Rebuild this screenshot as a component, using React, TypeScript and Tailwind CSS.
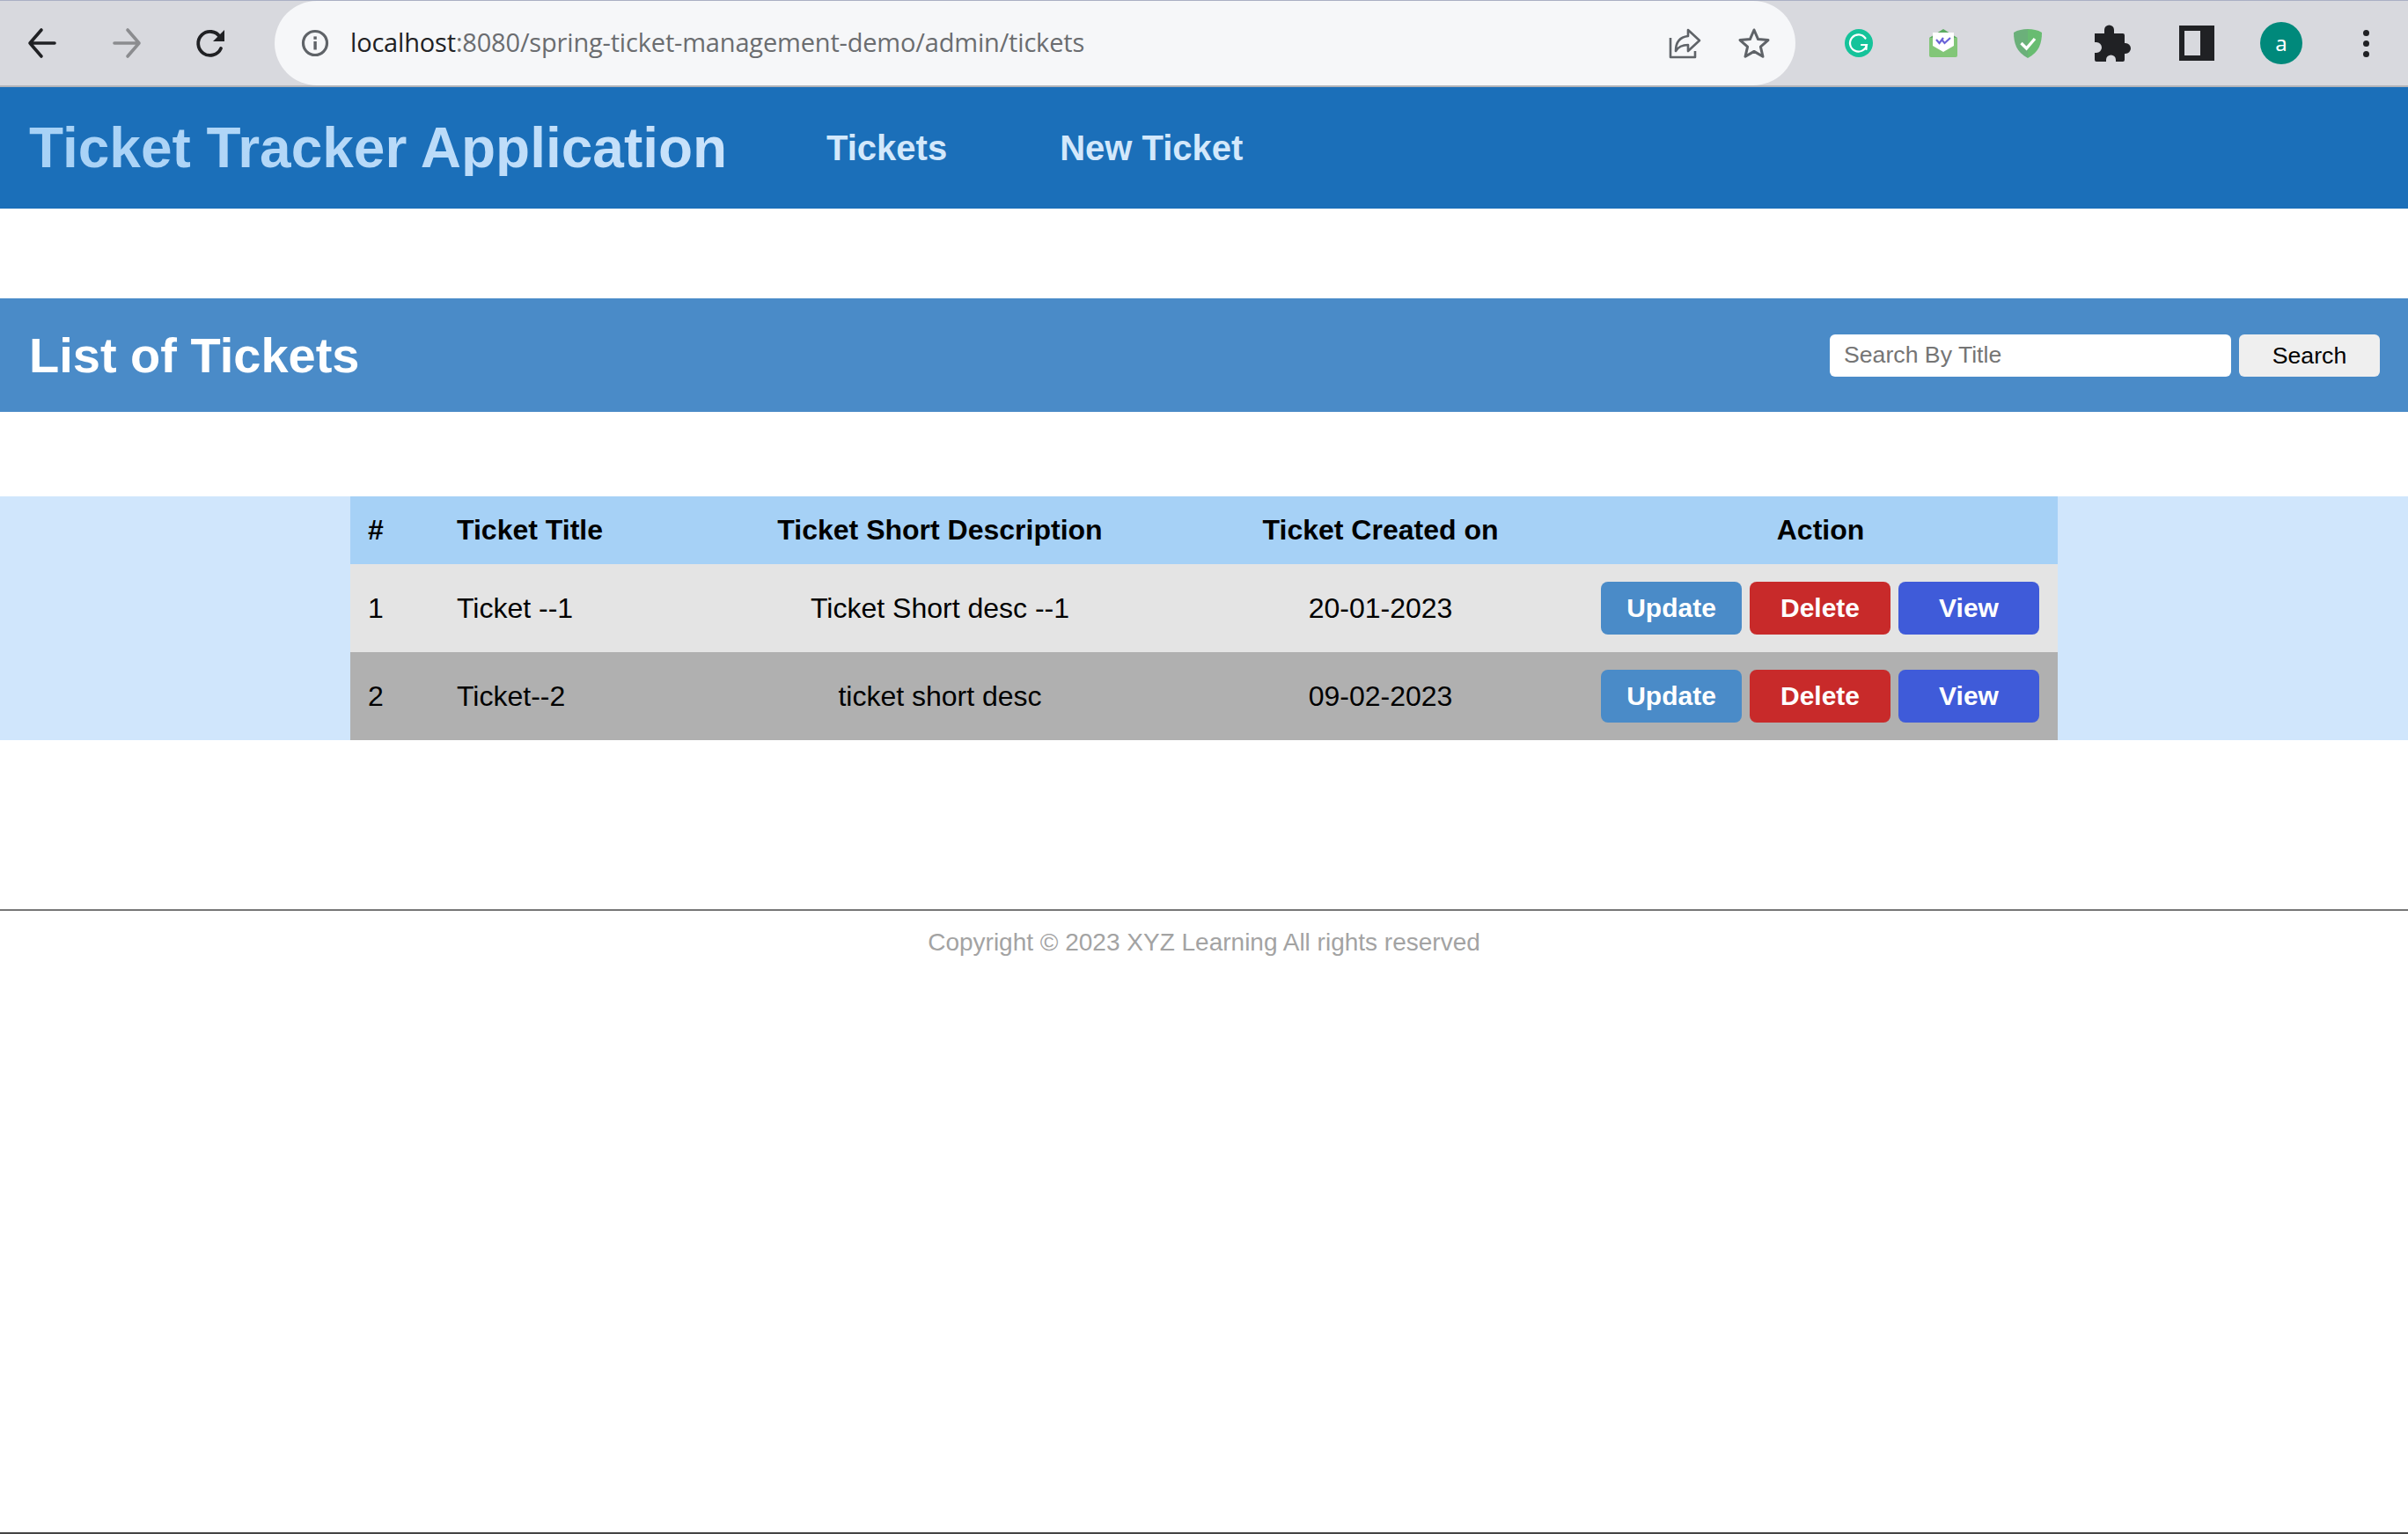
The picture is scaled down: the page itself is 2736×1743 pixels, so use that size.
import React from "react";

const slot = "flex h-full w-[96px] shrink-0 items-center justify-center";

function Toolbar() {
  return (
    <div className="flex h-[99px] items-stretch border-t border-b-2 border-t-[#aab0c4] border-b-[#b1b3b8] bg-[#d8d9de]">
      <div className={slot}>
        <svg width="36" height="36" viewBox="0 0 36 36" fill="none" stroke="#202124" strokeWidth="3.6" strokeLinecap="round" strokeLinejoin="round"><path d="M32 18H4M17 3 4 18l13 15" /></svg>
      </div>
      <div className={slot}>
        <svg width="36" height="36" viewBox="0 0 36 36" fill="none" stroke="#8b8c8f" strokeWidth="3.6" strokeLinecap="round" strokeLinejoin="round"><path d="M4 18h28M19 3l13 15-13 15" /></svg>
      </div>
      <div className={slot}>
        <svg width="36" height="36" viewBox="0 0 36 36" fill="none"><path d="M29 24a13.5 13.5 0 1 1-1-13" stroke="#202124" strokeWidth="3.8" strokeLinecap="round" /><path d="M33 3v13H20z" fill="#202124" /></svg>
      </div>
      <div className="ml-[24px] flex w-[1728px] shrink-0 items-center rounded-full bg-[#f6f7f9] pl-[30px] pr-[28px]">
        <svg width="32" height="32" viewBox="0 0 32 32" fill="none" className="shrink-0"><circle cx="16" cy="16" r="13.5" stroke="#5f6368" strokeWidth="3.2" /><rect x="14.4" y="14" width="3.4" height="9.5" fill="#5f6368" /><rect x="14.4" y="8.4" width="3.4" height="3.4" fill="#5f6368" /></svg>
        <div className="ml-[24px] pb-[3px] font-['Open_Sans',sans-serif] text-[29px] leading-none tracking-[-0.18px] whitespace-nowrap text-[#6b6d70]">
          <span className="text-[#202124]">localhost</span>:8080/spring-ticket-management-demo/admin/tickets
        </div>
        <div className="ml-auto flex items-center gap-[41px]">
          <svg width="38" height="38" viewBox="0 0 38 38" fill="none" stroke="#5f6368" strokeWidth="2.6" strokeLinejoin="round"><path d="M3 13v22h28v-7" /><path d="M23 4l13 12-13 12v-7c-7 0-11 2-14 7 0-10 5-16 14-17z" /></svg>
          <svg width="38" height="38" viewBox="0 0 38 38" fill="none" stroke="#5f6368" strokeWidth="3" strokeLinejoin="round"><path d="M19 4l4.6 10.6 11.4 1-8.6 7.5 2.6 11.2L19 28.4 9 34.3l2.6-11.2L3 15.6l11.4-1z" /></svg>
        </div>
      </div>
      <div className="ml-[24px] flex h-full">
        <div className={slot}>
          <svg width="34" height="34" viewBox="0 0 34 34" fill="none"><circle cx="17" cy="17" r="16" fill="#15c39a" /><path d="M24.5 11.5a9.6 9.6 0 1 0 1.5 7.5h-6" stroke="#fff" strokeWidth="2.2" strokeLinecap="round" /><path d="M25.5 19v5" stroke="#fff" strokeWidth="2.2" strokeLinecap="round" /></svg>
        </div>
        <div className={slot}>
          <svg width="34" height="34" viewBox="0 0 34 34" fill="none"><path d="M17 1 1 11h32z" fill="#5cab62" /><path d="M1 11v20a2 2 0 0 0 2 2h28a2 2 0 0 0 2-2V11z" fill="#82c678" /><path d="M5 5h24v15l-12 7-12-7z" fill="#fff" /><path d="M9 13l3.5 4L17 11M16 14l2.5 3L25 11" stroke="#6a63d8" strokeWidth="2.2" fill="none" /></svg>
        </div>
        <div className={slot}>
          <svg width="34" height="34" viewBox="0 0 34 34" fill="none"><path d="M17 1C11 1 6 2 1 5c0 12 3 22 16 29z" fill="#6bb07a" /><path d="M17 1c6 0 11 1 16 4 0 12-3 22-16 29z" fill="#68bc71" /><path d="M9.5 17l6 6 9.5-11" stroke="#fff" strokeWidth="3.4" /></svg>
        </div>
        <div className={slot}>
          <svg width="42" height="42" viewBox="0 0 42 42"><path d="M1 10h11V6a5.5 5.5 0 0 1 11 0v4h10a2 2 0 0 1 2 2v9h1a6 6 0 0 1 0 12h-1v7a2 2 0 0 1-2 2h-8v-2a5.5 5.5 0 0 0-11 0v2H3a2 2 0 0 1-2-2v-8h2a6 6 0 0 0 0-12H1z" fill="#202124" /></svg>
        </div>
        <div className={slot}>
          <div className="flex h-[40px] w-[40px] justify-start border-[6px] border-r-[16px] border-[#202124] bg-[#d8d9de]" />
        </div>
        <div className={slot}>
          <div className="flex h-[48px] w-[48px] items-center justify-center rounded-full bg-[#00897b] font-['Noto_Sans',sans-serif] text-[24px] leading-none text-white">a</div>
        </div>
        <div className={slot}>
          <div className="flex flex-col gap-[5px]">
            <span className="h-[7px] w-[7px] rounded-full bg-[#202124]" />
            <span className="h-[7px] w-[7px] rounded-full bg-[#202124]" />
            <span className="h-[7px] w-[7px] rounded-full bg-[#202124]" />
          </div>
        </div>
      </div>
    </div>
  );
}

const rows = [
  { n: "1", title: "Ticket --1", desc: "Ticket Short desc --1", date: "20-01-2023", bg: "bg-[#e4e4e4]" },
  { n: "2", title: "Ticket--2", desc: "ticket short desc", date: "09-02-2023", bg: "bg-[#b0b0b0]" },
];

const btn = "flex h-[60px] w-[160px] items-center justify-center rounded-[8px] pb-[1px] text-[30px] font-bold text-white";

export default function App() {
  return (
    <div className="flex h-[1743px] flex-col overflow-hidden bg-white font-['Liberation_Sans',Arial,sans-serif] text-black">
      <Toolbar />

      <header className="flex h-[138px] items-center bg-[#1b6fb9] pl-[33px]">
        <h1 className="w-[906px] bg-gradient-to-r from-[#a6d1f6] to-[#cfe5fb] bg-clip-text text-[64px] leading-none font-bold text-transparent">
          <span className="inline-block">Ticket Tracker Application</span>
        </h1>
        <nav className="flex items-center gap-[128px] text-[40px] font-bold text-[#d3e8fb]">
          <a>Tickets</a>
          <a>New Ticket</a>
        </nav>
      </header>

      <section className="mt-[102px] flex h-[129px] items-center justify-between bg-[#4a8bc8] pl-[33px] pr-[32px]">
        <h2 className="text-[56px] leading-none font-bold text-white">List of Tickets</h2>
        <form className="flex items-center gap-[9px]">
          <input
            placeholder="Search By Title"
            className="h-[48px] w-[456px] rounded-[6px] bg-white px-[16px] text-[26.67px] outline-none placeholder:text-[#757575]"
          />
          <button type="button" className="h-[48px] w-[160px] rounded-[6px] bg-[#efefef] text-[26.67px] text-black">Search</button>
        </form>
      </section>

      <div className="mt-[96px] flex justify-center bg-[#d0e6fc]">
        <table className="w-[1940px] table-fixed border-collapse text-[32px]">
          <colgroup>
            <col className="w-[101px]" />
            <col className="w-[299px]" />
            <col className="w-[540px]" />
            <col className="w-[461px]" />
            <col className="w-[539px]" />
          </colgroup>
          <thead>
            <tr className="h-[77px] bg-[#a6d1f6] font-bold">
              <th className="pb-[1px] pl-[20px] text-left">#</th>
              <th className="pb-[1px] pl-[20px] text-left whitespace-nowrap">Ticket Title</th>
              <th className="pb-[1px] text-center whitespace-nowrap">Ticket Short Description</th>
              <th className="pb-[1px] text-center whitespace-nowrap">Ticket Created on</th>
              <th className="pb-[1px] text-center">Action</th>
            </tr>
          </thead>
          <tbody>
            {rows.map((r) => (
              <tr key={r.n} className={`h-[100px] ${r.bg}`}>
                <td className="pl-[20px]">{r.n}</td>
                <td className="pl-[20px] whitespace-nowrap">{r.title}</td>
                <td className="text-center whitespace-nowrap">{r.desc}</td>
                <td className="text-center">{r.date}</td>
                <td>
                  <div className="flex justify-end gap-[9px] pr-[21px]">
                    <button type="button" className={`${btn} bg-[#4a8bc8]`}>Update</button>
                    <button type="button" className={`${btn} bg-[#c82a2a]`}>Delete</button>
                    <button type="button" className={`${btn} bg-[#3f5bd9]`}>View</button>
                  </div>
                </td>
              </tr>
            ))}
          </tbody>
        </table>
      </div>

      <footer className="mt-[192px] border-t-2 border-[#777777] pt-[19px] text-center text-[28px] leading-[34px] text-[#a3a3a3]">
        Copyright © 2023 XYZ Learning All rights reserved
      </footer>

      <div className="mt-auto h-[2px] bg-[#444444]" />
    </div>
  );
}
